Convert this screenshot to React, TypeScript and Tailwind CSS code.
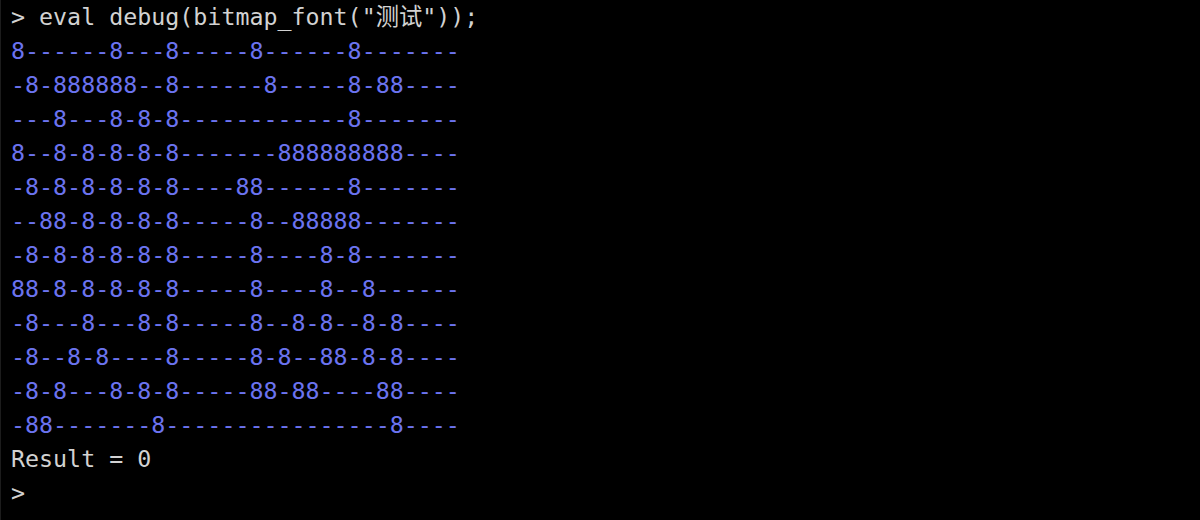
const rows = [
  "8------8---8-----8------8-------",
  "-8-888888--8------8-----8-88----",
  "---8---8-8-8------------8-------",
  "8--8-8-8-8-8-------888888888----",
  "-8-8-8-8-8-8----88------8-------",
  "--88-8-8-8-8-----8--88888-------",
  "-8-8-8-8-8-8-----8----8-8-------",
  "88-8-8-8-8-8-----8----8--8------",
  "-8---8---8-8-----8--8-8--8-8----",
  "-8--8-8----8-----8-8--88-8-8----",
  "-8-8---8-8-8-----88-88----88----",
  "-88-------8----------------8----",
]

export default function App() {
  return (
    <div className="h-[520px] w-[1200px] overflow-hidden border-l border-[#1c1c1c] bg-black pl-[10px] font-['DejaVu_Sans_Mono','Noto_Sans_CJK_SC',monospace] text-[23.3px] leading-[34px] text-[#d2d2d2]">
      <div className="whitespace-pre">
        {'> eval debug(bitmap_font("测试"));'}
      </div>
      {rows.map((row, i) => (
        <div key={i} className="whitespace-pre text-[#6b73ef]">
          {row}
        </div>
      ))}
      <div className="whitespace-pre">Result = 0</div>
      <div className="whitespace-pre">{">"}</div>
    </div>
  )
}
